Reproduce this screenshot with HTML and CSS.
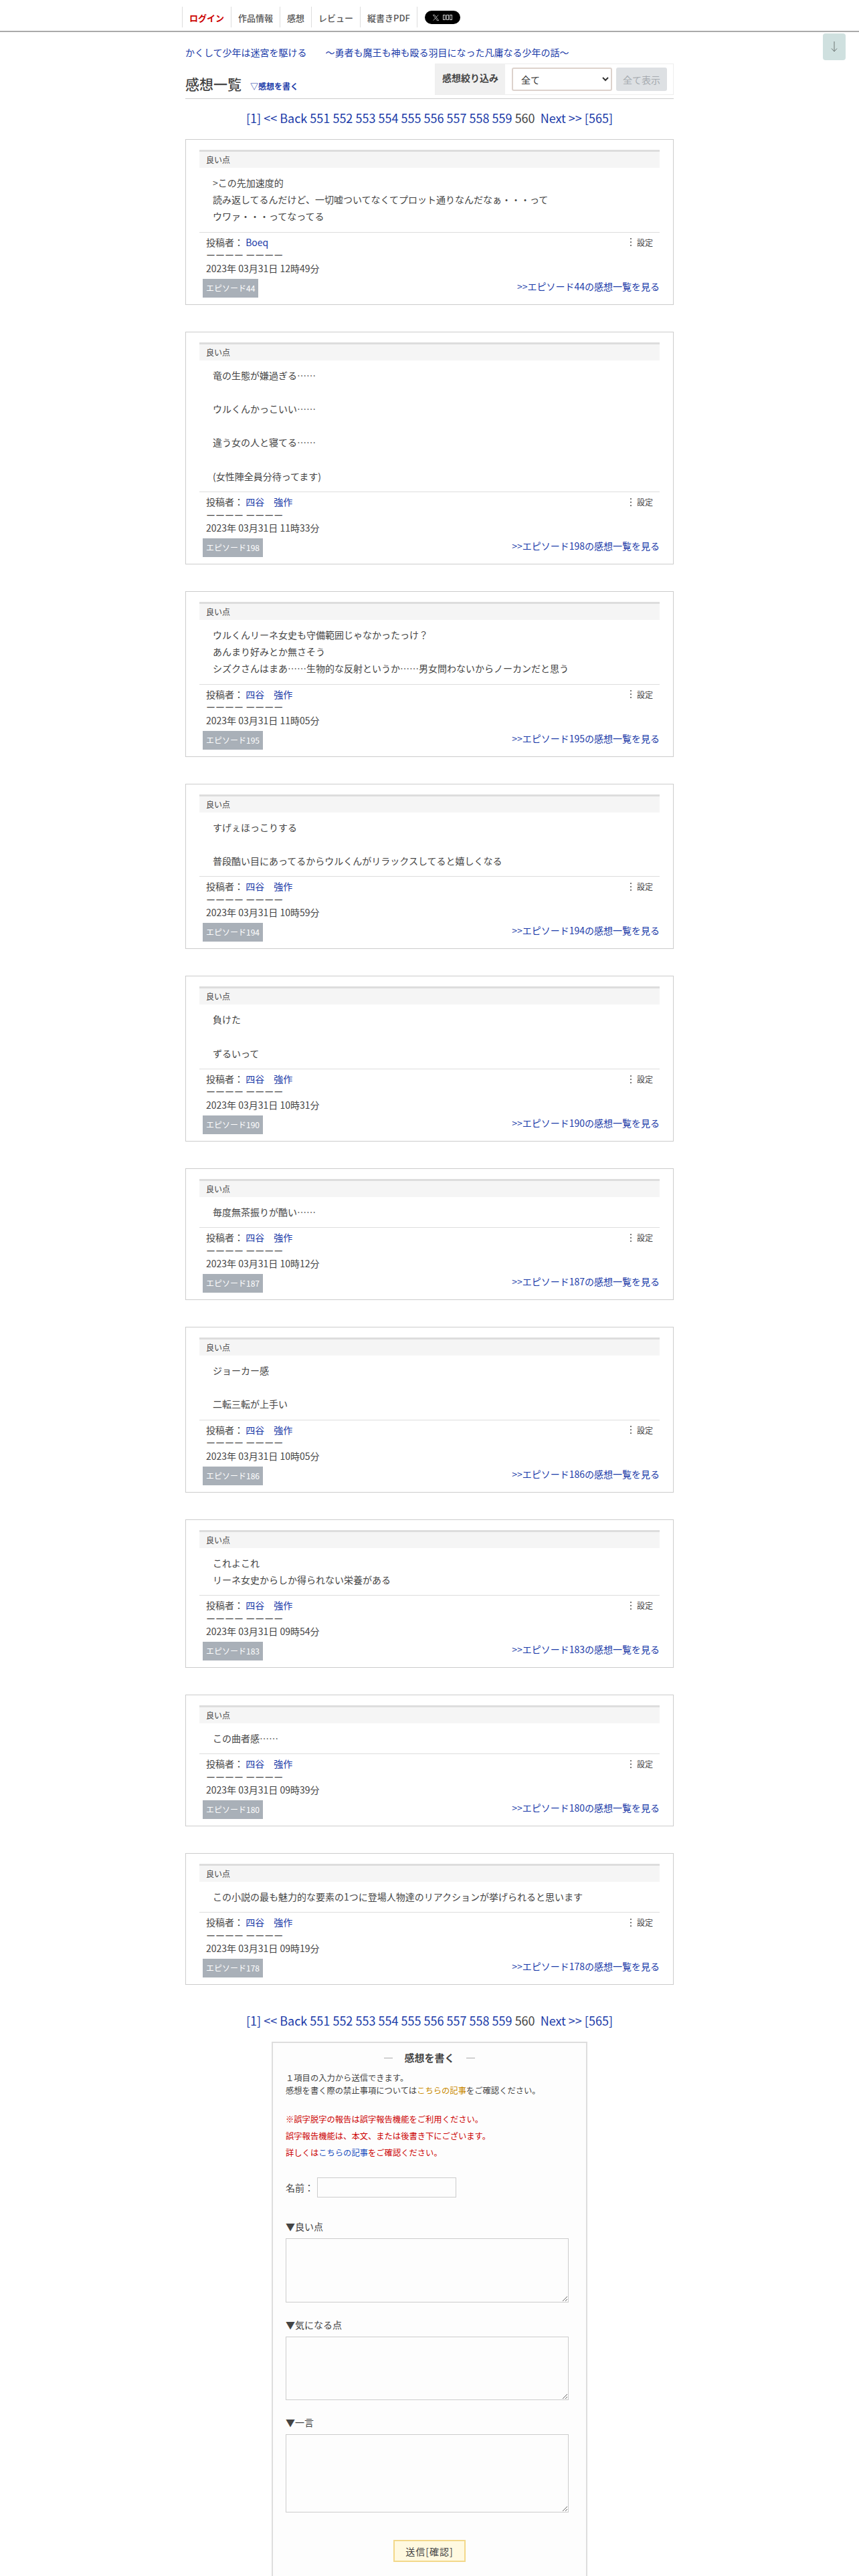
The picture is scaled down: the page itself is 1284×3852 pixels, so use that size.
FILE: index.html
```html
<!DOCTYPE html>
<html lang="ja">
<head>
    <meta charset="UTF-8">
    <title>感想一覧</title>
    <link rel="stylesheet" href="styles.css">
</head>
<body>
<div class="page">
    <header class="global-nav">
        <ul class="nav-list">
            <li class="nav-item nav-login"><a href="#">ログイン</a></li>
            <li class="nav-item"><a href="#">作品情報</a></li>
            <li class="nav-item"><a href="#">感想</a></li>
            <li class="nav-item"><a href="#">レビュー</a></li>
            <li class="nav-item"><a href="#">縦書きPDF</a></li>
            <li class="nav-share">
                <a href="#" class="x-button">
                    <svg class="x-icon" viewBox="0 0 24 24"><path d="M3 3h5l13 18h-5zM20 3l-7.5 8M11 13l-7.5 8" fill="none" stroke="#fff" stroke-width="1.4"/></svg>
                    <span class="tofu"></span><span class="tofu"></span><span class="tofu"></span>
                </a>
            </li>
        </ul>
    </header>

    <a href="#" class="scroll-button">
        <svg class="scroll-arrow" viewBox="0 0 12 18"><path d="M6 1v15M2 11.5L6 16l4-4.5" fill="none" stroke="#6d7674" stroke-width="1"/></svg>
    </a>

    <main class="content">
        <p class="novel-title"><a href="#">かくして少年は迷宮を駆ける　　～勇者も魔王も神も殴る羽目になった凡庸なる少年の話～</a></p>

        <div class="list-head">
            <div class="list-title">
                <h1>感想一覧</h1>
                <a href="#" class="write-link">▽感想を書く</a>
            </div>
            <form class="filter">
                <span class="filter-label">感想絞り込み</span>
                <select class="filter-select"><option>全て</option></select>
                <button type="button" class="filter-button">全て表示</button>
            </form>
        </div>

        <p class="pager pager-top"><a href="#">[1]</a> <a href="#">&lt;&lt;</a> <a href="#">Back</a> <a href="#">551</a> <a href="#">552</a> <a href="#">553</a> <a href="#">554</a> <a href="#">555</a> <a href="#">556</a> <a href="#">557</a> <a href="#">558</a> <a href="#">559</a> 560&nbsp; <a href="#">Next</a> <a href="#">&gt;&gt;</a> <a href="#">[565]</a></p>

        <article class="card">
            <h2 class="card-label">良い点</h2>
            <div class="card-body">&gt;この先加速度的<br>読み返してるんだけど、一切嘘ついてなくてプロット通りなんだなぁ・・・って<br>ウワァ・・・ってなってる</div>
            <div class="card-meta">
                <div class="meta-row"><span>投稿者： <a href="#">Boeq</a></span><span class="meta-setting"><i></i>設定</span></div>
                <div>ーーーー ーーーー</div>
                <div>2023年 03月31日 12時49分</div>
            </div>
            <div class="card-foot"><span class="episode-badge">エピソード44</span><a href="#" class="episode-link">&gt;&gt;エピソード44の感想一覧を見る</a></div>
        </article>

        <article class="card">
            <h2 class="card-label">良い点</h2>
            <div class="card-body">竜の生態が嫌過ぎる……<br><br>ウルくんかっこいい……<br><br>違う女の人と寝てる……<br><br>(女性陣全員分待ってます)</div>
            <div class="card-meta">
                <div class="meta-row"><span>投稿者： <a href="#">四谷　強作</a></span><span class="meta-setting"><i></i>設定</span></div>
                <div>ーーーー ーーーー</div>
                <div>2023年 03月31日 11時33分</div>
            </div>
            <div class="card-foot"><span class="episode-badge">エピソード198</span><a href="#" class="episode-link">&gt;&gt;エピソード198の感想一覧を見る</a></div>
        </article>

        <article class="card">
            <h2 class="card-label">良い点</h2>
            <div class="card-body">ウルくんリーネ女史も守備範囲じゃなかったっけ？<br>あんまり好みとか無さそう<br>シズクさんはまあ……生物的な反射というか……男女問わないからノーカンだと思う</div>
            <div class="card-meta">
                <div class="meta-row"><span>投稿者： <a href="#">四谷　強作</a></span><span class="meta-setting"><i></i>設定</span></div>
                <div>ーーーー ーーーー</div>
                <div>2023年 03月31日 11時05分</div>
            </div>
            <div class="card-foot"><span class="episode-badge">エピソード195</span><a href="#" class="episode-link">&gt;&gt;エピソード195の感想一覧を見る</a></div>
        </article>

        <article class="card">
            <h2 class="card-label">良い点</h2>
            <div class="card-body">すげぇほっこりする<br><br>普段酷い目にあってるからウルくんがリラックスしてると嬉しくなる</div>
            <div class="card-meta">
                <div class="meta-row"><span>投稿者： <a href="#">四谷　強作</a></span><span class="meta-setting"><i></i>設定</span></div>
                <div>ーーーー ーーーー</div>
                <div>2023年 03月31日 10時59分</div>
            </div>
            <div class="card-foot"><span class="episode-badge">エピソード194</span><a href="#" class="episode-link">&gt;&gt;エピソード194の感想一覧を見る</a></div>
        </article>

        <article class="card">
            <h2 class="card-label">良い点</h2>
            <div class="card-body">負けた<br><br>ずるいって</div>
            <div class="card-meta">
                <div class="meta-row"><span>投稿者： <a href="#">四谷　強作</a></span><span class="meta-setting"><i></i>設定</span></div>
                <div>ーーーー ーーーー</div>
                <div>2023年 03月31日 10時31分</div>
            </div>
            <div class="card-foot"><span class="episode-badge">エピソード190</span><a href="#" class="episode-link">&gt;&gt;エピソード190の感想一覧を見る</a></div>
        </article>

        <article class="card">
            <h2 class="card-label">良い点</h2>
            <div class="card-body">毎度無茶振りが酷い……</div>
            <div class="card-meta">
                <div class="meta-row"><span>投稿者： <a href="#">四谷　強作</a></span><span class="meta-setting"><i></i>設定</span></div>
                <div>ーーーー ーーーー</div>
                <div>2023年 03月31日 10時12分</div>
            </div>
            <div class="card-foot"><span class="episode-badge">エピソード187</span><a href="#" class="episode-link">&gt;&gt;エピソード187の感想一覧を見る</a></div>
        </article>

        <article class="card">
            <h2 class="card-label">良い点</h2>
            <div class="card-body">ジョーカー感<br><br>二転三転が上手い</div>
            <div class="card-meta">
                <div class="meta-row"><span>投稿者： <a href="#">四谷　強作</a></span><span class="meta-setting"><i></i>設定</span></div>
                <div>ーーーー ーーーー</div>
                <div>2023年 03月31日 10時05分</div>
            </div>
            <div class="card-foot"><span class="episode-badge">エピソード186</span><a href="#" class="episode-link">&gt;&gt;エピソード186の感想一覧を見る</a></div>
        </article>

        <article class="card">
            <h2 class="card-label">良い点</h2>
            <div class="card-body">これよこれ<br>リーネ女史からしか得られない栄養がある</div>
            <div class="card-meta">
                <div class="meta-row"><span>投稿者： <a href="#">四谷　強作</a></span><span class="meta-setting"><i></i>設定</span></div>
                <div>ーーーー ーーーー</div>
                <div>2023年 03月31日 09時54分</div>
            </div>
            <div class="card-foot"><span class="episode-badge">エピソード183</span><a href="#" class="episode-link">&gt;&gt;エピソード183の感想一覧を見る</a></div>
        </article>

        <article class="card">
            <h2 class="card-label">良い点</h2>
            <div class="card-body">この曲者感……</div>
            <div class="card-meta">
                <div class="meta-row"><span>投稿者： <a href="#">四谷　強作</a></span><span class="meta-setting"><i></i>設定</span></div>
                <div>ーーーー ーーーー</div>
                <div>2023年 03月31日 09時39分</div>
            </div>
            <div class="card-foot"><span class="episode-badge">エピソード180</span><a href="#" class="episode-link">&gt;&gt;エピソード180の感想一覧を見る</a></div>
        </article>

        <article class="card">
            <h2 class="card-label">良い点</h2>
            <div class="card-body">この小説の最も魅力的な要素の1つに登場人物達のリアクションが挙げられると思います</div>
            <div class="card-meta">
                <div class="meta-row"><span>投稿者： <a href="#">四谷　強作</a></span><span class="meta-setting"><i></i>設定</span></div>
                <div>ーーーー ーーーー</div>
                <div>2023年 03月31日 09時19分</div>
            </div>
            <div class="card-foot"><span class="episode-badge">エピソード178</span><a href="#" class="episode-link">&gt;&gt;エピソード178の感想一覧を見る</a></div>
        </article>

        <p class="pager pager-bottom"><a href="#">[1]</a> <a href="#">&lt;&lt;</a> <a href="#">Back</a> <a href="#">551</a> <a href="#">552</a> <a href="#">553</a> <a href="#">554</a> <a href="#">555</a> <a href="#">556</a> <a href="#">557</a> <a href="#">558</a> <a href="#">559</a> 560&nbsp; <a href="#">Next</a> <a href="#">&gt;&gt;</a> <a href="#">[565]</a></p>

        <form class="write-form">
            <h2 class="form-title">感想を書く</h2>
            <p class="form-note">１項目の入力から送信できます。<br>感想を書く際の禁止事項については<a href="#" class="note-link">こちらの記事</a>をご確認ください。</p>
            <p class="form-warning">※誤字脱字の報告は誤字報告機能をご利用ください。<br>誤字報告機能は、本文、または後書き下にございます。<br>詳しくは<a href="#">こちらの記事</a>をご確認ください。</p>
            <div class="name-row">
                <label>名前：</label>
                <input type="text" class="name-input">
            </div>
            <label class="field-label label-good">▼良い点</label>
            <textarea class="field-area area-good"></textarea>
            <label class="field-label">▼気になる点</label>
            <textarea class="field-area area-concern"></textarea>
            <label class="field-label">▼一言</label>
            <textarea class="field-area area-word"></textarea>
            <div class="form-actions">
                <button type="button" class="submit-button">送信[確認]</button>
            </div>
        </form>
    </main>
</div>
</body>
</html>
```

FILE: styles.css
```css
/* General */
html, body {
    margin: 0;
    padding: 0;
}

body {
    background: #fff;
    color: #444;
    font-family: "Noto Sans CJK JP", "Noto Sans", sans-serif;
    font-size: 14px;
}

a {
    color: #1a3aa8;
    text-decoration: none;
}

.page {
    position: relative;
    height: 3852px;
    overflow: hidden;
}

/* Global nav */
.global-nav {
    height: 48px;
    padding: 10px 0 0 272px;
    box-sizing: border-box;
    border-bottom: 2px solid #aaa;
}

.nav-list {
    display: flex;
    margin: 0;
    padding: 0;
    list-style: none;
}

.nav-item {
    height: 31px;
    line-height: 34px;
    padding: 0 10px;
    border-left: 1px solid #ddd;
    font-size: 13px;
    font-weight: 500;
}

.nav-item a {
    color: #555;
}

.nav-login a {
    color: #c00;
    font-weight: 700;
}

.nav-share {
    height: 31px;
    border-left: 1px solid #ddd;
    padding: 6px 0 0 11px;
    box-sizing: border-box;
}

.x-button {
    display: flex;
    align-items: center;
    justify-content: center;
    gap: 1px;
    width: 53px;
    height: 20px;
    border-radius: 10px;
    background: #000;
}

.x-icon {
    width: 11px;
    height: 11px;
    margin-right: 4px;
}

.tofu {
    width: 4px;
    height: 8px;
    border: 1px solid #ccc;
    box-sizing: border-box;
}

.scroll-button {
    position: absolute;
    top: 50px;
    left: 1230px;
    display: flex;
    align-items: center;
    justify-content: center;
    width: 34px;
    height: 40px;
    border-radius: 4px;
    background: #cfe0df;
}

.scroll-arrow {
    width: 12px;
    height: 18px;
}

/* Content */
.content {
    width: 730px;
    margin-left: 277px;
}

.novel-title {
    margin: 20px 0 0;
    line-height: 20px;
}

.list-head {
    display: flex;
    justify-content: space-between;
    margin-top: 7px;
    height: 52px;
    border-bottom: 1px solid #ccc;
}

.list-title {
    display: flex;
    align-items: baseline;
    gap: 13px;
    padding-top: 13px;
}

.list-title h1 {
    margin: 0;
    font-size: 21px;
    font-weight: 500;
    line-height: 34px;
}

.write-link {
    font-size: 12px;
    font-weight: 700;
}

/* Filter */
.filter {
    display: flex;
    width: 357px;
    height: 47px;
    box-sizing: border-box;
    border: 1px solid #eee;
}

.filter-label {
    width: 104px;
    padding-top: 8px;
    box-sizing: border-box;
    background: #f0f0f0;
    font-weight: 700;
    text-align: center;
    line-height: 24px;
}

.filter-select {
    width: 150px;
    height: 35px;
    margin: 5px 6px 0 10px;
    padding-left: 8px;
    border: 2px solid #ddd2cc;
    border-radius: 3px;
    background: #fff;
    color: #333;
    font-family: inherit;
    font-size: 14px;
}

.filter-button {
    width: 76px;
    height: 35px;
    margin-top: 5px;
    padding: 0;
    border: none;
    border-radius: 3px;
    background: #dde0e3;
    color: #a6abb0;
    font-family: inherit;
    font-size: 14px;
}

/* Pager */
.pager {
    margin: 0;
    font-size: 18px;
    line-height: 30px;
    text-align: center;
}

.pager-top {
    margin: 13px 0 17px;
}

.pager-bottom {
    margin: 38px 0 17px;
}

/* Review card */
.card {
    margin-bottom: 40px;
    padding: 15px 20px 10px;
    border: 1px solid #ccc;
}

.card:last-of-type {
    margin-bottom: 0;
}

.card-label {
    margin: 0;
    height: 24px;
    padding-left: 10px;
    border-top: 3px solid #ddd;
    background: #f5f5f5;
    font-size: 12px;
    font-weight: 400;
    line-height: 24px;
}

.card-body {
    padding: 10px 20px;
    border-bottom: 1px solid #ddd;
    line-height: 25.2px;
}

.card-meta {
    padding: 5px 10px 0;
    line-height: 19.5px;
}

.meta-row {
    display: flex;
    justify-content: space-between;
}

.meta-setting {
    display: flex;
    align-items: center;
    font-size: 12px;
}

.meta-setting i {
    width: 2px;
    height: 12px;
    margin-right: 8px;
    background: repeating-linear-gradient(#777 0 2px, transparent 2px 5px);
}

.card-foot {
    display: flex;
    justify-content: space-between;
    align-items: flex-start;
    margin-top: 5.5px;
    padding-left: 5px;
}

.episode-badge {
    padding: 0 5px;
    background: #a9b0b8;
    color: #fff;
    font-size: 12px;
    line-height: 28px;
}

.episode-link {
    line-height: 22px;
}

/* Write form */
.write-form {
    display: block;
    width: 472px;
    margin-left: 129px;
    padding: 0 19px 60px;
    box-sizing: border-box;
    border: 2px solid #ddd;
    background: #fdfdfd;
}

.form-title {
    display: flex;
    justify-content: center;
    align-items: center;
    gap: 17px;
    margin: 11px 0 0;
    font-size: 15px;
    font-weight: 700;
    line-height: 22px;
}

.form-title::before,
.form-title::after {
    content: "";
    width: 13px;
    height: 1px;
    background: #aaa;
}

.form-note {
    margin: 10px 0 0;
    font-size: 12.3px;
    line-height: 19px;
}

.note-link {
    color: #c98a00;
}

.form-warning {
    margin: 21px 0 0;
    color: #c00;
    font-size: 12.3px;
    line-height: 25px;
}

.form-warning a {
    color: #1a4fc0;
}

.name-row {
    display: flex;
    align-items: center;
    margin-top: 24px;
}

.name-row label {
    width: 47px;
}

.name-input {
    width: 208px;
    height: 30px;
    box-sizing: border-box;
    border: 1px solid #ccc;
    background: #fdfdfd;
}

.field-label {
    display: block;
    margin-top: 23px;
    line-height: 20px;
}

.label-good {
    margin-top: 33px;
}

.field-area {
    display: block;
    width: 423px;
    margin-top: 8px;
    box-sizing: border-box;
    border: 1px solid #ccc;
    background: #fdfdfd;
}

.area-good {
    height: 96px;
}

.area-concern {
    height: 95px;
}

.area-word {
    height: 117px;
}

.form-actions {
    margin-top: 41px;
    padding-left: 161px;
}

.submit-button {
    width: 108px;
    height: 33px;
    padding: 0;
    border: 2px solid #f3d88a;
    background: #fff9e0;
    color: #444;
    font-family: inherit;
    font-size: 14px;
    letter-spacing: 1px;
}
```
